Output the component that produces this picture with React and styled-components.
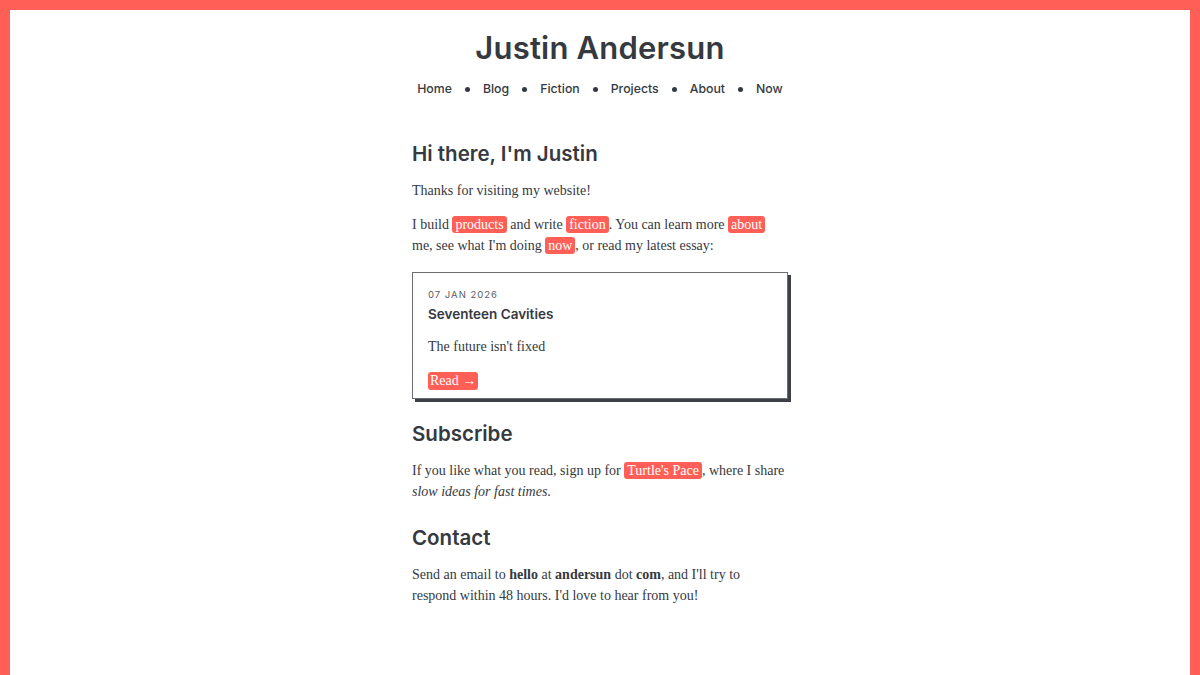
import { Fragment } from "react";
import styled, { createGlobalStyle } from "styled-components";

const GlobalStyle = createGlobalStyle`
  html, body {
    margin: 0;
    padding: 0;
    background: #ff5f56;
  }
  body {
    color: #353940;
  }
`;

const Frame = styled.div`
  margin: 10px 10px 0 10px;
  background: #ffffff;
  min-height: 665px;
  display: flex;
  flex-direction: column;
  align-items: center;
`;

const Header = styled.header`
  display: flex;
  flex-direction: column;
  align-items: center;
  padding-top: 25px;
`;

const SiteTitle = styled.h1`
  margin: 0;
  font-family: "Inter", "Open Sans", sans-serif;
  font-weight: 600;
  font-size: 31px;
  letter-spacing: 0.2px;
  line-height: 26px;
  color: #353940;
`;

const Nav = styled.nav`
  display: flex;
  align-items: center;
  gap: 13px;
  margin-top: 20px;
`;

const NavLink = styled.a`
  font-family: "Inter", "Open Sans", sans-serif;
  font-weight: 500;
  font-size: 12.3px;
  color: #353940;
  text-decoration: none;
`;

const Dot = styled.span`
  width: 5px;
  height: 5px;
  border-radius: 50%;
  background: #353940;
  margin-top: 2px;
`;

const Main = styled.main`
  width: 376px;
  margin-top: 43px;
`;

const Heading = styled.h2`
  margin: 0 0 11px 0;
  font-family: "Inter", "Open Sans", sans-serif;
  font-weight: 600;
  font-size: 20.5px;
  line-height: 30px;
  color: #353940;
`;

const Para = styled.p`
  margin: 0 0 13px 0;
  max-width: ${(p) => (p.$narrow ? "370px" : "none")};
  font-family: "Liberation Serif", serif;
  font-size: 14px;
  line-height: 21px;
  color: #353940;
`;

const Tag = styled.a`
  background: #ff5f56;
  color: #ffffff;
  border-radius: 3px;
  padding: 1px 3px;
  text-decoration: none;
`;

const Card = styled.article`
  border: 1px solid #6b6e73;
  box-shadow: 3px 3px 0 #3d4047;
  padding: 15px 15px 8px 15px;
  margin: 16px 0 20px 0;
`;

const CardDate = styled.div`
  font-family: "Inter", "Open Sans", sans-serif;
  font-size: 9.5px;
  letter-spacing: 1px;
  color: #5a5d62;
  line-height: 14px;
`;

const CardTitle = styled.h3`
  margin: 2px 0 12px 0;
  font-family: "Inter", "Open Sans", sans-serif;
  font-weight: 600;
  font-size: 13.5px;
  line-height: 20px;
  color: #353940;
`;

const ReadButton = styled.a`
  display: inline-block;
  background: #ff5f56;
  color: #ffffff;
  border-radius: 3px;
  padding: 0 2px;
  font-family: "Liberation Serif", serif;
  font-size: 14px;
  line-height: 18px;
  text-decoration: none;
  margin-top: 2px;
`;

const Section = styled.section`
  margin-bottom: 21px;
`;

const navItems = ["Home", "Blog", "Fiction", "Projects", "About", "Now"];

export default function App() {
  return (
    <>
      <GlobalStyle />
      <Frame>
        <Header>
          <SiteTitle>Justin Andersun</SiteTitle>
          <Nav>
            {navItems.map((item, i) => (
              <Fragment key={item}>
                {i > 0 && <Dot />}
                <NavLink href="#">{item}</NavLink>
              </Fragment>
            ))}
          </Nav>
        </Header>
        <Main>
          <Heading>Hi there, I'm Justin</Heading>
          <Para>Thanks for visiting my website!</Para>
          <Para>
            I build <Tag href="#">products</Tag> and write <Tag href="#">fiction</Tag>. You
            can learn more <Tag href="#">about</Tag> me, see what I'm doing{" "}
            <Tag href="#">now</Tag>, or read my latest essay:
          </Para>
          <Card>
            <CardDate>07 JAN 2026</CardDate>
            <CardTitle>Seventeen Cavities</CardTitle>
            <Para>The future isn't fixed</Para>
            <ReadButton href="#">Read →</ReadButton>
          </Card>
          <Section>
            <Heading>Subscribe</Heading>
            <Para>
              If you like what you read, sign up for <Tag href="#">Turtle's Pace</Tag>, where I
              share <em>slow ideas for fast times</em>.
            </Para>
          </Section>
          <Section>
            <Heading>Contact</Heading>
            <Para $narrow>
              Send an email to <b>hello</b> at <b>andersun</b> dot <b>com</b>, and I'll try to
              respond within 48 hours. I'd love to hear from you!
            </Para>
          </Section>
        </Main>
      </Frame>
    </>
  );
}
